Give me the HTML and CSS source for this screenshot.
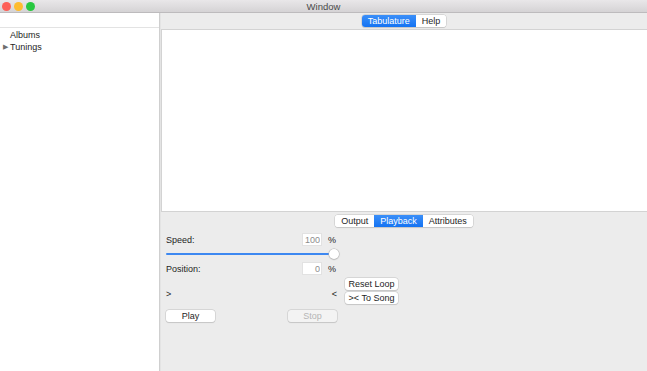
FILE: index.html
```html
<!DOCTYPE html>
<html lang="en">
<head>
  <meta charset="UTF-8">
  <meta name="viewport" content="width=device-width, initial-scale=1.0">
  <title>Window</title>
  <link rel="stylesheet" href="styles.css">
</head>
<body>
  <div class="window">
    <!-- Barra de título -->
    <div class="titlebar">
      <div class="lights">
        <span class="light red"></span>
        <span class="light yellow"></span>
        <span class="light green"></span>
      </div>
      <div class="title">Window</div>
      <div></div>
    </div>

    <div class="main">
      <aside class="sidebar">
        <div class="sidebar-head"></div>
        <ul class="tree">
          <li class="tree-item"><span class="arrow"></span>Albums</li>
          <li class="tree-item"><span class="arrow">&#9654;</span>Tunings</li>
        </ul>
      </aside>

      <section class="pane">
        <div class="pane-bar">
          <div class="segmented">
            <button class="seg active">Tabulature</button>
            <button class="seg">Help</button>
          </div>
        </div>

        <div class="canvas"></div>

        <div class="controls">
          <div class="tabs">
            <div class="segmented">
              <button class="seg">Output</button>
              <button class="seg active">Playback</button>
              <button class="seg">Attributes</button>
            </div>
          </div>

          <div class="playback">
            <div class="field-row">
              <span class="label">Speed:</span>
              <input class="num" type="text" value="100" readonly>
              <span class="unit">%</span>
            </div>
            <div class="slider">
              <div class="track"></div>
              <div class="knob"></div>
            </div>
            <div class="field-row">
              <span class="label">Position:</span>
              <input class="num" type="text" value="0" readonly>
              <span class="unit">%</span>
            </div>

            <div class="loop-row">
              <div class="markers">
                <span>&gt;</span>
                <span>&lt;</span>
              </div>
              <div class="loop-buttons">
                <button class="btn">Reset Loop</button>
                <button class="btn">&gt;&lt; To Song</button>
              </div>
            </div>

            <div class="play-row">
              <button class="btn wide">Play</button>
              <button class="btn wide" disabled>Stop</button>
            </div>
          </div>
        </div>
      </section>
    </div>
  </div>
</body>
</html>
```

FILE: styles.css
```css
/* Estilos generales */
body {
  margin: 0;
  font-family: "Liberation Sans", Arial, sans-serif;
  font-size: 9px;
  color: #1e1e1e;
  background: #ececec;
}
.window {
  width: 647px;
  height: 371px;
  display: flex;
  flex-direction: column;
  overflow: hidden;
}
/* Barra de título */
.titlebar {
  height: 12px;
  display: grid;
  grid-template-columns: 1fr auto 1fr;
  align-items: center;
  background: linear-gradient(#e9e7e9, #d5d3d5);
  border-bottom: 1px solid #bdbbbd;
}
.lights {
  display: flex;
  gap: 3px;
  padding-left: 2px;
}
.light {
  width: 9px;
  height: 9px;
  border-radius: 50%;
}
.red { background: #fd5f57; }
.yellow { background: #febc2e; }
.green { background: #28c840; }
.title {
  color: #4a4a4a;
  font-size: 9.5px;
}
.main {
  flex: 1;
  display: flex;
  min-height: 0;
}
/* Barra lateral */
.sidebar {
  width: 159px;
  background: white;
  border-right: 1px solid #cfcfcf;
}
.sidebar-head {
  height: 14px;
  border-bottom: 1px solid #e3e3e3;
}
.tree {
  list-style: none;
  margin: 0;
  padding: 1px 0 0;
}
.tree-item {
  height: 12px;
  line-height: 12px;
  display: flex;
  align-items: center;
}
.arrow {
  width: 10px;
  font-size: 6.5px;
  color: #6e6e6e;
  padding-left: 3px;
  box-sizing: border-box;
}
/* Panel derecho */
.pane {
  flex: 1;
  display: flex;
  flex-direction: column;
  border-left: 1px solid #e4e4e4;
}
.pane-bar {
  height: 16px;
  display: flex;
  justify-content: center;
  align-items: flex-end;
  padding-bottom: 2px;
  box-sizing: border-box;
}
.segmented {
  display: flex;
  background: white;
  border-radius: 3px;
  box-shadow: 0 0 0 0.5px #c4c4c4, 0 0.5px 1px rgba(0,0,0,0.15);
  overflow: hidden;
}
.seg {
  font: inherit;
  height: 12px;
  padding: 0 6px;
  border: none;
  background: white;
  color: #1e1e1e;
  line-height: 12px;
}
.seg.active {
  background: linear-gradient(#3b8ff8, #1473f2);
  color: white;
}
.canvas {
  height: 183px;
  box-sizing: border-box;
  background: white;
  border: 1px solid #d3d3d3;
  border-right: none;
}
.controls {
  flex: 1;
  display: flex;
  flex-direction: column;
}
.tabs {
  display: flex;
  justify-content: center;
  padding-top: 3px;
}
.playback {
  width: 233px;
  padding: 6px 0 0 5px;
  display: flex;
  flex-direction: column;
}
.field-row {
  width: 172px;
  height: 13px;
  display: flex;
  align-items: center;
}
.label {
  flex: 1;
}
.num {
  width: 20px;
  height: 13px;
  box-sizing: border-box;
  border: 1px solid #e2e2e2;
  background: white;
  color: #8c8c8c;
  font: inherit;
  text-align: right;
  padding: 0 1px 0 0;
  outline: none;
}
.unit {
  width: 16px;
  padding-left: 6px;
  box-sizing: border-box;
}
.slider {
  width: 173px;
  height: 10px;
  margin: 3px 0;
  display: flex;
  align-items: center;
}
.track {
  flex: 1;
  height: 2px;
  background: #3d88f1;
  border-radius: 1px;
}
.knob {
  width: 10px;
  height: 10px;
  margin-left: -5px;
  border-radius: 50%;
  background: white;
  box-shadow: 0 0 0 0.5px #b8b8b8, 0 0.5px 1.5px rgba(0,0,0,0.3);
}
.loop-row {
  display: flex;
  margin-top: 3px;
}
.markers {
  width: 171px;
  display: flex;
  justify-content: space-between;
  align-items: center;
  padding-top: 5px;
}
.loop-buttons {
  margin-left: 8px;
  display: flex;
  flex-direction: column;
  gap: 2px;
}
.btn {
  font: inherit;
  height: 12px;
  line-height: 12px;
  padding: 0;
  width: 53px;
  border: none;
  border-radius: 3px;
  background: white;
  color: #1e1e1e;
  box-shadow: 0 0 0 0.5px #c4c4c4, 0 0.5px 1px rgba(0,0,0,0.15);
}
.btn:disabled {
  background: #f3f3f3;
  color: #b5b5b5;
}
.play-row {
  width: 171px;
  display: flex;
  justify-content: space-between;
  margin-top: 6px;
}
.btn.wide {
  width: 49px;
}
```
